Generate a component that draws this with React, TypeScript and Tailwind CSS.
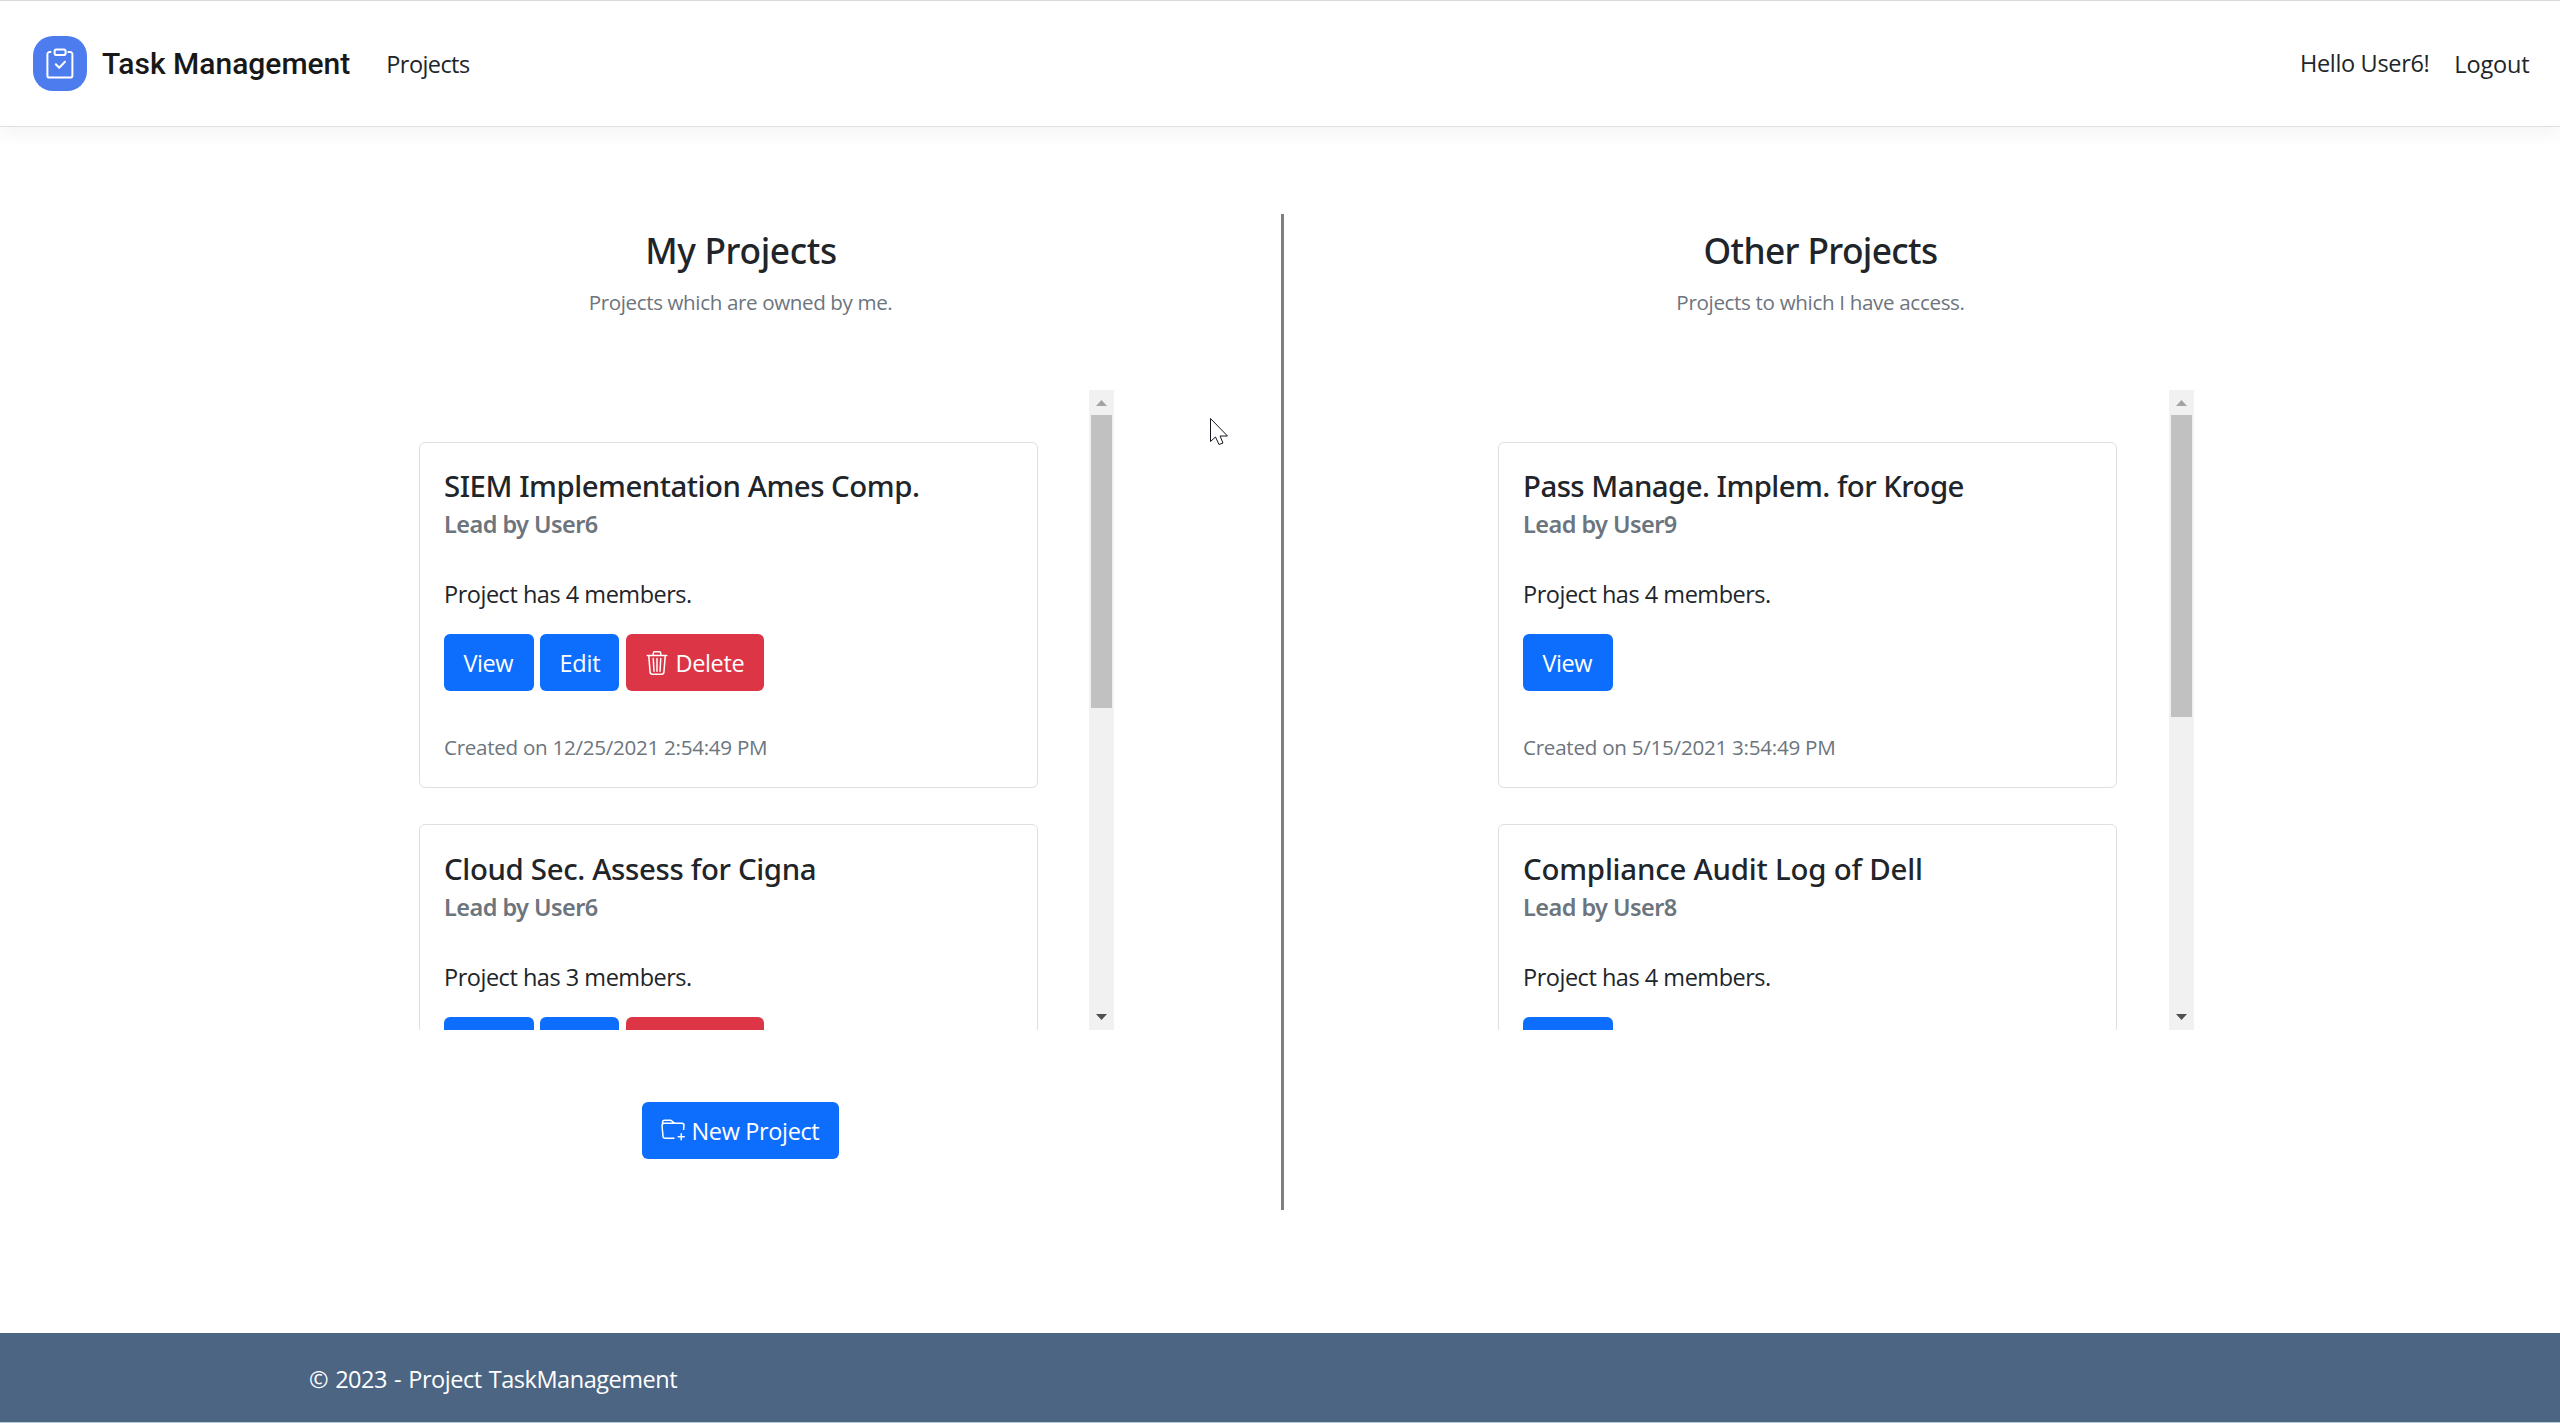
import type { ReactNode } from "react";
import { BsTrash3 } from "react-icons/bs";

type Project = {
  title: string;
  titleClass: string;
  lead: string;
  members: number;
  created?: string;
  createdClass?: string;
};

const myProjects: Project[] = [
  {
    title: "SIEM Implementation Ames Comp.",
    titleClass: "tracking-[-0.48px]",
    lead: "User6",
    members: 4,
    created: "12/25/2021 2:54:49 PM",
    createdClass: "tracking-[-0.28px]",
  },
  {
    title: "Cloud Sec. Assess for Cigna",
    titleClass: "tracking-[-0.34px]",
    lead: "User6",
    members: 3,
  },
];

const otherProjects: Project[] = [
  {
    title: "Pass Manage. Implem. for Kroge",
    titleClass: "tracking-[-0.55px]",
    lead: "User9",
    members: 4,
    created: "5/15/2021 3:54:49 PM",
    createdClass: "tracking-[-0.26px]",
  },
  {
    title: "Compliance Audit Log of Dell",
    titleClass: "tracking-[-0.2px]",
    lead: "User8",
    members: 4,
  },
];

function Logo() {
  return (
    <div className="flex h-[55px] w-[54px] items-center justify-center rounded-[20px] bg-[#4c7cee]">
      <svg width="30" height="34" viewBox="0 0 30 34" fill="none" stroke="white" strokeWidth="2" strokeLinecap="round" strokeLinejoin="round">
        <path d="M5.5 5H4.6A2.2 2.2 0 0 0 2.4 7.2V28.4A2.2 2.2 0 0 0 4.6 30.6H25.2A2.2 2.2 0 0 0 27.4 28.4V7.2A2.2 2.2 0 0 0 25.2 5H23.3" />
        <rect x="9.6" y="2.4" width="11" height="5.6" rx="1.8" />
        <path d="M10.8 17.3L14.2 20.7L20 14.8" />
      </svg>
    </div>
  );
}

function FolderPlus() {
  return (
    <svg width="24" height="24" viewBox="0 0 16 16" fill="currentColor">
      <path d="m.5 3 .04.87a1.99 1.99 0 0 0-.342 1.311l.637 7A2 2 0 0 0 2.826 14H9v-1H2.826a1 1 0 0 1-.995-.91l-.637-7A1 1 0 0 1 2.19 4h11.62a1 1 0 0 1 .996 1.09L14.54 8h1.005l.256-2.819A2 2 0 0 0 13.81 3H9.828a2 2 0 0 1-1.414-.586l-.828-.828A2 2 0 0 0 6.172 1H2.5a2 2 0 0 0-2 2m5.672-1a1 1 0 0 1 .707.293L7.586 3H2.19c-.24 0-.47.042-.683.12L1.5 2.98a1 1 0 0 1 1-.98z" />
      <path d="M13.5 10a.5.5 0 0 1 .5.5V12h1.5a.5.5 0 1 1 0 1H14v1.5a.5.5 0 1 1-1 0V13h-1.5a.5.5 0 0 1 0-1H13v-1.5a.5.5 0 0 1 .5-.5" />
    </svg>
  );
}

function Button({ className, icon, children }: { className: string; icon?: ReactNode; children: ReactNode }) {
  return (
    <button className={`flex h-[57px] shrink-0 items-center gap-[6.5px] rounded-md whitespace-nowrap text-white ${className}`}>
      {icon}
      <span className="pt-0.5">{children}</span>
    </button>
  );
}

function ProjectCard({ project, owned }: { project: Project; owned: boolean }) {
  return (
    <article className="mb-[36px] h-[346.5px] w-[619px] rounded-md border border-[#dfdfdf] px-6 pt-[25.6px]">
      <h5 className={`h-9 font-['Noto_Sans',sans-serif] text-[29.4px] leading-9 font-medium ${project.titleClass}`}>
        {project.title}
      </h5>
      <h6 className="mt-1.5 h-[29px] font-['Noto_Sans',sans-serif] leading-[29px] font-semibold tracking-[-0.55px] text-[#6c757d]">
        Lead by {project.lead}
      </h6>
      <p className="mt-[37px] h-9 leading-9 tracking-[-0.48px]">Project has {project.members} members.</p>
      <div className="mt-[22px] flex">
        <Button className="w-[90px] bg-[#0d6efd] pl-[19.5px] tracking-[-0.45px]">View</Button>
        {owned && (
          <>
            <Button className="ml-1.5 w-[79px] bg-[#0d6efd] pl-[19.5px] tracking-[-0.2px]">Edit</Button>
            <Button className="ml-[7px] w-[138px] bg-[#dc3545] pl-[19px] tracking-[-0.37px]" icon={<BsTrash3 size={24} />}>
              Delete
            </Button>
          </>
        )}
      </div>
      {project.created && (
        <p className={`mt-[39.8px] h-8 text-[20.6px] leading-8 text-[#6c757d] ${project.createdClass}`}>
          Created on {project.created}
        </p>
      )}
    </article>
  );
}

function ScrollBar({ thumbClass }: { thumbClass: string }) {
  return (
    <div className="flex h-full w-[25px] flex-col items-center bg-[#f1f1f1]">
      <div className="flex h-[25px] shrink-0 items-center pt-px">
        <svg width="11" height="6" viewBox="0 0 11 6">
          <path d="M5.5 0L11 6H0Z" fill="#a3a3a3" />
        </svg>
      </div>
      <div className={`w-[21px] bg-[#c1c1c1] ${thumbClass}`} />
      <div className="mt-auto flex h-[25px] shrink-0 items-center pb-px">
        <svg width="11" height="6" viewBox="0 0 11 6">
          <path d="M0 0H11L5.5 6Z" fill="#505050" />
        </svg>
      </div>
    </div>
  );
}

type ColumnProps = {
  heading: string;
  headingClass: string;
  subtitle: string;
  subtitleClass: string;
  projects: Project[];
  owned: boolean;
  listClass: string;
  thumbClass: string;
  children?: ReactNode;
};

function Column(props: ColumnProps) {
  return (
    <section className="flex w-[747px] flex-col items-center pt-[13.6px]">
      <h3 className={`h-11 font-['Noto_Sans',sans-serif] text-[35.3px] leading-[44px] font-medium ${props.headingClass}`}>
        {props.heading}
      </h3>
      <p className={`mt-[14.4px] h-8 text-[20.6px] leading-8 text-[#6c757d] ${props.subtitleClass}`}>{props.subtitle}</p>
      <div className="mt-[72px] flex h-[640px] w-full justify-between overflow-hidden">
        <div className={`pt-[51.7px] ${props.listClass}`}>
          {props.projects.map((project) => (
            <ProjectCard key={project.title} project={project} owned={props.owned} />
          ))}
        </div>
        <ScrollBar thumbClass={props.thumbClass} />
      </div>
      {props.children}
    </section>
  );
}

export default function App() {
  return (
    <div className="relative flex h-[1423px] w-[2560px] flex-col overflow-hidden bg-white font-['Open_Sans',sans-serif] text-[23.5px] text-[#212529]">
      <header className="flex h-[127px] shrink-0 items-center border-t border-b border-t-[#d9d9d9] border-b-[#dfdfe6] pr-[30.5px] pl-[33px] shadow-[0_6px_18px_rgba(0,0,0,0.05)]">
        <Logo />
        <a className="ml-[15px] font-['Roboto',sans-serif] text-[30px] font-medium text-[#181818]">Task Management</a>
        <a className="ml-9 pt-0.5 tracking-[-0.58px]">Projects</a>
        <nav className="ml-auto flex items-center gap-[25px]">
          <span className="tracking-[-0.34px]">Hello User6!</span>
          <a className="pt-0.5 tracking-[-0.16px]">Logout</a>
        </nav>
      </header>

      <main className="flex flex-1 items-start pt-[87px] pl-[367px]">
        <Column
          heading="My Projects"
          headingClass="tracking-[-0.36px] pl-px"
          subtitle="Projects which are owned by me."
          subtitleClass="tracking-[-0.38px]"
          projects={myProjects}
          owned
          listClass="pl-[52px]"
          thumbClass="h-[293px]"
        >
          <Button className="mt-[72px] w-[197px] bg-[#0d6efd] pl-[19px] tracking-[-0.36px]" icon={<FolderPlus />}>
            New Project
          </Button>
        </Column>
        <div className="ml-[167px] h-[995.5px] w-[3px] bg-[#808080]" />
        <div className="ml-[163px]">
          <Column
            heading="Other Projects"
            headingClass="tracking-[-0.64px]"
            subtitle="Projects to which I have access."
            subtitleClass="tracking-[-0.34px]"
            projects={otherProjects}
            owned={false}
            listClass="pl-[51px]"
            thumbClass="h-[302px]"
          />
        </div>
      </main>

      <footer className="flex h-[90px] shrink-0 items-center border-b border-[#b9cad8] bg-[#4b6583] pt-[5px] pl-[309px] tracking-[-0.46px] [word-spacing:1.4px] text-white">
        © 2023 - Project TaskManagement
      </footer>

      {/* Mouse pointer */}
      <svg className="absolute top-[418px] left-[1210px]" width="19" height="28" viewBox="0 0 19 28">
        <path d="M.5 .5V23.5L5.5 19L9 26.5L13 25L10 18H17.5Z" fill="white" stroke="#15151f" strokeWidth="1" />
      </svg>
    </div>
  );
}
